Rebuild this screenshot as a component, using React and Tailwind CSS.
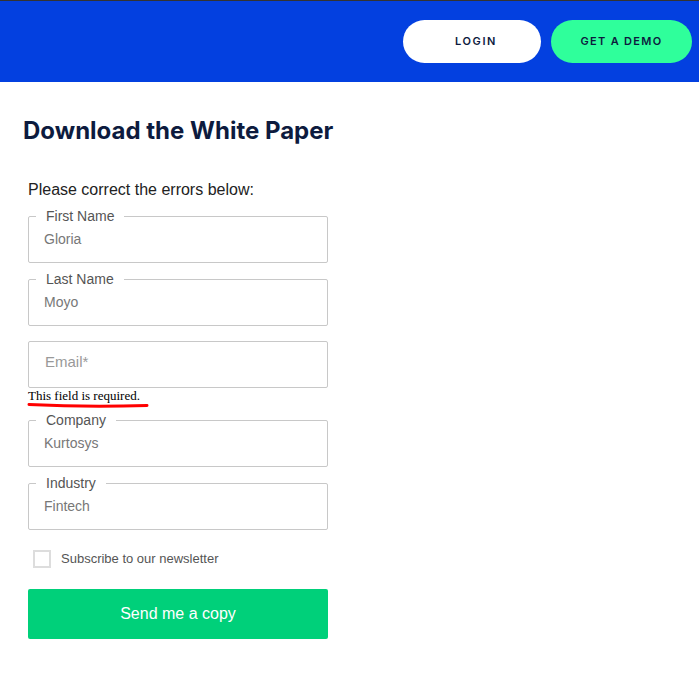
import React from 'react';

const fields = [
    { label: 'First Name', value: 'Gloria' },
    { label: 'Last Name', value: 'Moyo' },
];

const fieldsAfter = [
    { label: 'Company', value: 'Kurtosys' },
    { label: 'Industry', value: 'Fintech' },
];

const Field = ({ label, value }) => (
    <fieldset className="mt-2 h-[55px] rounded-[2px] border border-[#c8c8c8] px-[15px] pt-0 pb-0">
        <legend className="ml-[-8px] px-[10px] text-[14px] leading-[16px] text-[#555]">{label}</legend>
        <div className="pt-[5px] text-[14px] leading-[20px] text-[#777]">{value}</div>
    </fieldset>
);

const App = () => {
    return (
        <div className="min-h-[700px] w-[699px] bg-white" style={{ fontFamily: '"Liberation Sans", Arial, sans-serif' }}>
            <header className="flex h-[82px] items-center justify-end gap-[10px] border-t border-[#333] bg-[#0340e0] pr-[7px]">
                <button className="flex h-[43px] w-[138px] items-center justify-center rounded-full bg-white pl-[8px] font-['Inter',sans-serif] text-[11px] font-semibold tracking-[1.6px] text-[#0d1b3e]">
                    LOGIN
                </button>
                <button className="flex h-[43px] w-[141px] items-center justify-center rounded-full bg-[#2fff9b] font-['Inter',sans-serif] text-[11px] font-semibold tracking-[1.3px] text-[#0d1b3e]">
                    GET A DEMO
                </button>
            </header>

            <main className="px-[23px] pt-[34px]">
                <h2 className="font-['Inter',sans-serif] text-[24px] font-bold leading-[30px] text-[#0d1b3e]">
                    Download the White Paper
                </h2>

                <form className="ml-[5px] mt-[34px] w-[300px]" onSubmit={(e) => e.preventDefault()}>
                    <p className="text-[16px] leading-[20px] text-[#222]">Please correct the errors below:</p>

                    {fields.map((f) => (
                        <Field key={f.label} {...f} />
                    ))}

                    <div className="mt-[15px] flex h-[47px] items-center rounded-[2px] border border-[#c8c8c8] px-[16px] pb-[5px] text-[15px] text-[#999]">
                        Email*
                    </div>
                    <div className="relative h-[16px]">
                        <span className="block font-['Liberation_Serif',serif] text-[13px] leading-[16px] text-black">This field is required.</span>
                        <svg className="absolute left-[-1px] top-[14px]" width="124" height="7" viewBox="0 0 124 7">
                            <path d="M2 2.5 Q 60 5.5 120 3.5" stroke="#ff0000" strokeWidth="3" fill="none" strokeLinecap="round" />
                        </svg>
                    </div>

                    {fieldsAfter.map((f) => (
                        <Field key={f.label} {...f} />
                    ))}

                    <label className="mt-[19px] flex items-center gap-[10px] pl-[5px]">
                        <span className="h-[18px] w-[18px] border-2 border-[#ddd] bg-white" />
                        <span className="text-[13px] text-[#555]">Subscribe to our newsletter</span>
                    </label>

                    <button className="mt-[20px] h-[50px] w-full rounded-[2px] bg-[#00d07a] text-[16px] text-white">
                        Send me a copy
                    </button>
                </form>
            </main>
        </div>
    );
};

export default App;
